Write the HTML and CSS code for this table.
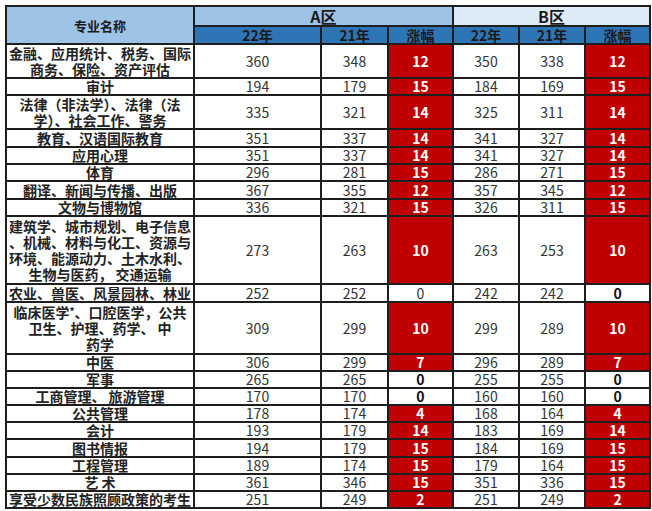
FILE: index.html
```html
<!DOCTYPE html>
<html lang="zh-CN">
<head>
<meta charset="utf-8">
<title>分数线</title>
<link rel="stylesheet" href="styles.css">
</head>
<body>
<table class="score">
  <colgroup>
    <col class="c-name"><col class="c-a22"><col class="c-a21"><col class="c-az">
    <col class="c-b22"><col class="c-b21"><col class="c-bz">
  </colgroup>
  <thead>
    <tr class="h1">
      <th rowspan="2" class="th-name">专业名称</th>
      <th colspan="3" class="th-a">A区</th>
      <th colspan="3" class="th-b">B区</th>
    </tr>
    <tr class="h2">
      <th class="th-sub">22年</th><th class="th-sub">21年</th><th class="th-sub">涨幅</th>
      <th class="th-sub">22年</th><th class="th-sub">21年</th><th class="th-sub">涨幅</th>
    </tr>
  </thead>
  <tbody>
    <tr class="l2"><td class="nm">金融、应用统计、税务、国际<br>商务、保险、资产评估</td><td>360</td><td>348</td><td class="up">12</td><td>350</td><td>338</td><td class="up">12</td></tr>
    <tr class="l1"><td class="nm">审计</td><td>194</td><td>179</td><td class="up">15</td><td>184</td><td>169</td><td class="up">15</td></tr>
    <tr class="l2"><td class="nm">法律（非法学）、法律（法<br>学）、社会工作、警务</td><td>335</td><td>321</td><td class="up">14</td><td>325</td><td>311</td><td class="up">14</td></tr>
    <tr class="l1b"><td class="nm">教育、汉语国际教育</td><td>351</td><td>337</td><td class="up">14</td><td>341</td><td>327</td><td class="up">14</td></tr>
    <tr class="l1"><td class="nm">应用心理</td><td>351</td><td>337</td><td class="up">14</td><td>341</td><td>327</td><td class="up">14</td></tr>
    <tr class="l1"><td class="nm">体育</td><td>296</td><td>281</td><td class="up">15</td><td>286</td><td>271</td><td class="up">15</td></tr>
    <tr class="l1b"><td class="nm">翻译、新闻与传播、出版</td><td>367</td><td>355</td><td class="up">12</td><td>357</td><td>345</td><td class="up">12</td></tr>
    <tr class="l1"><td class="nm">文物与博物馆</td><td>336</td><td>321</td><td class="up">15</td><td>326</td><td>311</td><td class="up">15</td></tr>
    <tr class="l4"><td class="nm">建筑学、城市规划、电子信息<br>、机械、材料与化工、资源与<br>环境、能源动力、土木水利、<br>生物与医药， 交通运输</td><td>273</td><td>263</td><td class="up">10</td><td>263</td><td>253</td><td class="up">10</td></tr>
    <tr class="l1b"><td class="nm">农业、兽医、风景园林、林业</td><td>252</td><td>252</td><td>0</td><td>242</td><td>242</td><td class="zero">0</td></tr>
    <tr class="l3"><td class="nm">临床医学<sup class="star">*</sup>、口腔医学，公共<br>卫生、护理、药学、 中<br>药学</td><td>309</td><td>299</td><td class="up">10</td><td>299</td><td>289</td><td class="up">10</td></tr>
    <tr class="l1"><td class="nm">中医</td><td>306</td><td>299</td><td class="up">7</td><td>296</td><td>289</td><td class="up">7</td></tr>
    <tr class="l1"><td class="nm">军事</td><td>265</td><td>265</td><td class="zero">0</td><td>255</td><td>255</td><td class="zero">0</td></tr>
    <tr class="l1"><td class="nm">工商管理、 旅游管理</td><td>170</td><td>170</td><td class="zero">0</td><td>160</td><td>160</td><td class="zero">0</td></tr>
    <tr class="l1"><td class="nm">公共管理</td><td>178</td><td>174</td><td class="up">4</td><td>168</td><td>164</td><td class="up">4</td></tr>
    <tr class="l1"><td class="nm">会计</td><td>193</td><td>179</td><td class="up">14</td><td>183</td><td>169</td><td class="up">14</td></tr>
    <tr class="l1b"><td class="nm">图书情报</td><td>194</td><td>179</td><td class="up">15</td><td>184</td><td>169</td><td class="up">15</td></tr>
    <tr class="l1"><td class="nm">工程管理</td><td>189</td><td>174</td><td class="up">15</td><td>179</td><td>164</td><td class="up">15</td></tr>
    <tr class="l1"><td class="nm">艺 术</td><td>361</td><td>346</td><td class="up">15</td><td>351</td><td>336</td><td class="up">15</td></tr>
    <tr class="l1"><td class="nm">享受少数民族照顾政策的考生</td><td>251</td><td>249</td><td class="up">2</td><td>251</td><td>249</td><td class="up">2</td></tr>
  </tbody>
</table>
</body>
</html>
```
FILE: styles.css
```css
html, body {
  margin: 0;
  padding: 0;
  background: #ffffff;
}
body {
  padding: 5px 0 0 5px;
  font-family: "Noto Sans CJK SC", "Noto Sans", sans-serif;
}
.score {
  border-collapse: collapse;
  table-layout: fixed;
  width: 644px;
  color: #333333;
  font-size: 14px;
}
.c-name { width: 188px; }
.c-a22 { width: 127px; }
.c-a21 { width: 67px; }
.c-az { width: 65px; }
.c-b22 { width: 66px; }
.c-b21 { width: 66px; }
.c-bz { width: 65px; }

.score th,
.score td {
  border: 2px solid #1e1e1e;
  padding: 0;
  text-align: center;
  vertical-align: middle;
  line-height: 15px;
  white-space: nowrap;
}
.score th {
  font-weight: 700;
  color: #1a1a1a;
}
.h1 { height: 20px; }
.h2 { height: 18px; }
.th-name {
  background: #9dc3e6;
  font-size: 13px;
  border-color: #3a3a3a;
}
.th-a {
  background: #9dc3e6;
  font-size: 16px;
  line-height: 16px;
  border-top-color: #555;
  border-bottom: 2px solid #1f4e79;
}
.th-b {
  background: #ddebf7;
  font-size: 16px;
  line-height: 16px;
  border-top-color: #555;
  border-bottom: 2px solid #1f4e79;
}
.th-sub {
  background: #2e75b6;
  font-size: 14px;
  line-height: 15px;
  color: #111a26;
}
.l1 { height: 17px; }
.l1b { height: 18px; }
.l2 { height: 34px; }
.l3 { height: 52px; }
.l4 { height: 68px; }

.l2 .nm,
.l3 .nm,
.l4 .nm {
  line-height: 16px;
}
.nm {
  font-weight: 700;
  color: #222222;
}
.star {
  font-size: 10px;
  line-height: 0;
  vertical-align: 3px;
}
.up {
  background: #c00000;
  color: #ffffff;
  font-weight: 700;
}
.zero {
  font-weight: 700;
  color: #111111;
}
```
